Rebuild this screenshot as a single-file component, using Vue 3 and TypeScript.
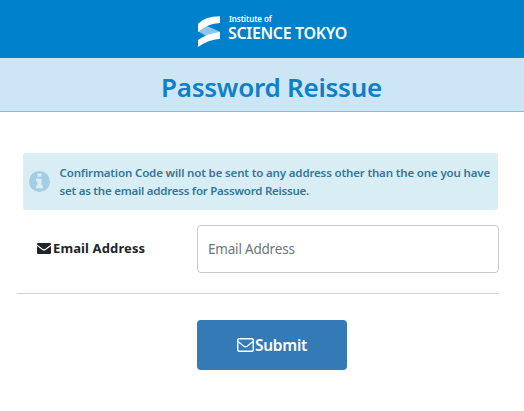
<script setup lang="ts">
import { ref } from 'vue'

const email = ref('')
</script>

<template>
  <div class="page">
    <header class="brand">
      <svg class="mark" viewBox="0 0 66 93" aria-hidden="true">
        <path d="M0 46Q10 31 27 30L66 47V52Q48 52 28 62Z" fill="#8fc3ea" />
        <path d="M0 48V23Q20 2 66 1V21Q28 23 0 48Z" fill="#fff" />
        <path d="M0 93V72Q30 51 66 48V68Q30 71 0 93Z" fill="#fff" />
      </svg>
      <div class="brand-text">
        <span class="brand-small">Institute of</span>
        <span class="brand-name">SCIENCE TOKYO</span>
      </div>
    </header>
    <h1 class="title"><span>Password Reissue</span></h1>
    <main class="content">
      <div class="notice">
        <svg class="info" viewBox="0 0 21 21" aria-hidden="true">
          <circle cx="10.5" cy="10.5" r="10.5" fill="#a2cfe2" />
          <path d="M8.5 2.5h4v3.3h-4zM7 7.8h5.5v6.6H14v2.8H7v-2.8h1.5v-3.8H7z" fill="#d9edf7" />
        </svg>
        <p>
          <span class="line first">Confirmation Code will not be sent to any address other than the one you have</span>
          <span class="line second">set as the email address for Password Reissue.</span>
        </p>
      </div>
      <form @submit.prevent>
        <div class="field">
          <label for="email">
            <svg class="envelope" viewBox="0 0 14 11" aria-hidden="true">
              <path d="M1 0h12q1 0 1 1v.4L8 6Q7 6.700 6 6L0 1.400V1q0-1 1-1zM0 2.900L5.400 7q1.600 1.200 3.200 0L14 2.900V10q0 1-1 1H1q-1 0-1-1z" fill="#212529" />
            </svg>
            <span>Email Address</span>
          </label>
          <input id="email" v-model="email" type="email" placeholder="Email Address" />
        </div>
        <div class="actions">
          <button type="submit">
            <svg class="outline" viewBox="0 0 17 14" aria-hidden="true">
              <rect x=".75" y=".75" width="15.500" height="12.500" rx="1.300" fill="none" stroke="#fff" stroke-width="1.400" />
              <path d="M1 3.500l5.800 4.700q1.700 1.200 3.400 0L16 3.500" fill="none" stroke="#fff" stroke-width="1.400" />
            </svg>
            <span>Submit</span>
          </button>
        </div>
      </form>
    </main>
  </div>
</template>

<style>
body {
  margin: 0;
  background: #fff;
}
</style>

<style scoped>
* {
  box-sizing: border-box;
}
.page {
  height: 411px;
  overflow: hidden;
  font-family: "Noto Sans", "Open Sans", sans-serif;
  color: #212529;
}
.brand {
  height: 58px;
  background: #0081cc;
  display: flex;
  padding: 16px 0 0 198px;
  gap: 9px;
}
.mark {
  width: 22px;
  height: 31px;
}
.brand-text {
  display: flex;
  flex-direction: column;
  color: #fff;
  white-space: nowrap;
  margin: -3px 0 0 -1px;
}
.brand-small {
  font-size: 8px;
  line-height: 11px;
  font-weight: 600;
  letter-spacing: -0.100px;
  margin-left: 1px;
}
.brand-name {
  font-size: 16px;
  line-height: 18px;
  font-weight: 600;
  letter-spacing: -0.350px;
}
.title {
  margin: 0;
  height: 54px;
  background: #cde6f5;
  border-bottom: 1px solid #80bcdf;
  color: #0f7fc8;
  font-size: 26px;
  line-height: 58px;
  font-weight: 600;
  letter-spacing: -0.250px;
  text-align: center;
  padding-left: 19px;
  white-space: nowrap;
}
.content {
  padding: 41px 25px 0 17px;
}
.notice {
  margin: 0 1px 0 6px;
  height: 57px;
  background: #d9edf5;
  border-radius: 3px;
  display: flex;
  align-items: center;
  padding-left: 6px;
  gap: 9.500px;
}
.info {
  width: 21px;
  height: 21px;
  flex: none;
}
.notice p {
  margin: 0;
  color: #31789a;
  font-size: 11.500px;
  line-height: 18px;
  font-weight: 600;
  white-space: nowrap;
}
.line {
  display: block;
}
.first {
  letter-spacing: -0.150px;
}
.second {
  letter-spacing: -0.230px;
}
.field {
  height: 84px;
  border-bottom: 1px solid #cfcfcf;
  display: flex;
  padding: 15px 0 0 20px;
}
label {
  width: 160px;
  height: 46px;
  display: flex;
  align-items: center;
  gap: 2px;
  font-size: 13px;
  font-weight: 700;
  letter-spacing: 0.120px;
}
.envelope {
  width: 14px;
  height: 11px;
}
input {
  width: 302px;
  height: 48px;
  border: 1px solid #c9c9c9;
  border-radius: 4px;
  padding: 0 10px;
  font: 400 13.500px "Noto Sans", sans-serif;
  letter-spacing: -0.200px;
  outline: none;
}
input::placeholder {
  color: #6c757d;
  opacity: 1;
}
.actions {
  padding: 26px 0 0 180px;
}
button {
  width: 150px;
  height: 50px;
  border: 0;
  border-radius: 4px;
  background: #337ab7;
  color: #fff;
  display: flex;
  align-items: center;
  justify-content: center;
  gap: 1px;
  font: 600 15.500px "Noto Sans", sans-serif;
  letter-spacing: -0.250px;
}
.outline {
  width: 17px;
  height: 14px;
}
</style>
